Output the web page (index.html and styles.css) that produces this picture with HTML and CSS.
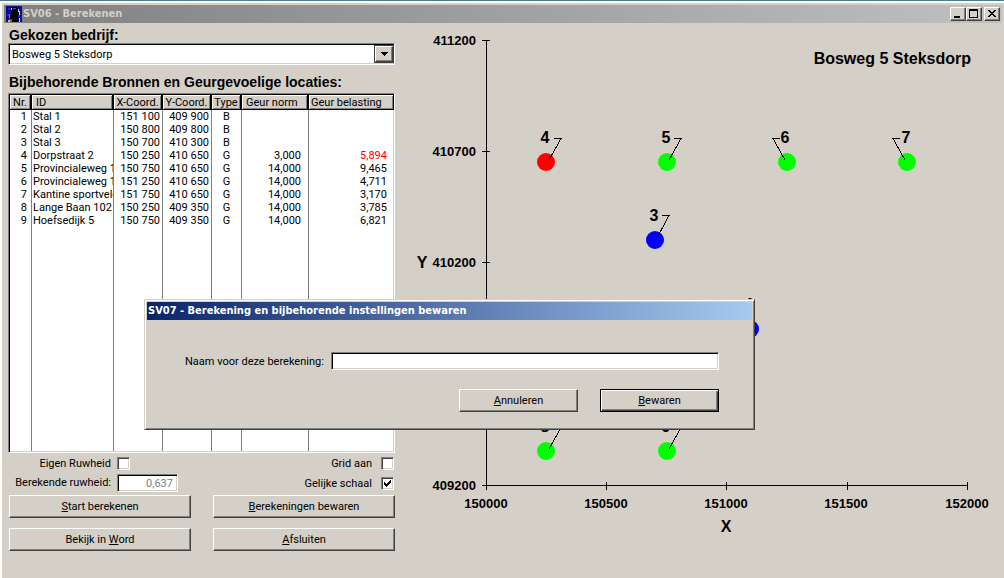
FILE: index.html
```html
<!DOCTYPE html>
<html lang="nl">
<head>
<meta charset="utf-8">
<title>SV06 - Berekenen</title>
<link rel="stylesheet" href="styles.css">
</head>
<body>
<div class="window">
  <header class="titlebar titlebar-inactive">
    <svg class="app-icon" viewBox="0 0 16 16" width="16" height="16" aria-hidden="true" shape-rendering="crispEdges">
      <rect width="16" height="16" fill="#0a0a8c"/>
      <path d="M2 2h2v2H2zM1 8h2v2H1zM12 9h2v2h-2zM3 11h1v3H3z" fill="#2222dd"/>
      <path d="M6 1h5v1h1v3h1v4h-1v7H4V9h1V4h1z" fill="#000"/>
      <path d="M5 2h1v2H5zM12 3h1v2h1v4h-1V6h-1zM13 12h1v4h-1z" fill="#b8d8e8"/>
      <path d="M3 8h1v4H3z" fill="#3aa"/>
      <path d="M4 13h2v3H4z" fill="#c33"/>
      <path d="M7 2h3v1H7z" fill="#555"/>
      <path d="M2 14h2v2H2z" fill="#cc4"/>
    </svg>
    <h1 class="title-text">SV06 - Berekenen</h1>
    <div class="window-controls">
      <button type="button" class="control" aria-label="Minimaliseren"><svg width="12" height="10" viewBox="0 0 12 10"><path d="M2 7h6v2H2z"/></svg></button>
      <button type="button" class="control" aria-label="Maximaliseren"><svg width="12" height="10" viewBox="0 0 12 10"><path fill-rule="evenodd" d="M1 0h9v9H1zM2 2v6h7V2z"/></svg></button>
      <button type="button" class="control control-close" aria-label="Sluiten"><svg width="12" height="10" viewBox="0 0 12 10" shape-rendering="crispEdges"><path d="M2 1h2v1h1v1h2V2h1V1h2v1H9v1H8v1H7v1h1v1h1v1h1v1H8V7H7V6H5v1H4v1H2V7h1V6h1V5h1V4H4V3H3V2H2z"/></svg></button>
    </div>
  </header>

  <div class="workspace">
    <main class="panel">
      <label class="heading" for="bedrijf">Gekozen bedrijf:</label>
      <div class="combo">
        <select id="bedrijf" class="combo-select"><option>Bosweg 5 Steksdorp</option></select>
        <span class="combo-arrow" aria-hidden="true"><svg width="7" height="4" viewBox="0 0 7 4" shape-rendering="crispEdges"><path d="M0 0h7v1H6v1H5v1H4v1H3V3H2V2H1V1H0z"/></svg></span>
      </div>
      <h2 class="heading heading-table">Bijbehorende Bronnen en Geurgevoelige locaties:</h2>
      <div class="grid-frame">
        <table class="grid">
          <colgroup><col class="c-nr"><col class="c-id"><col class="c-coord"><col class="c-coord"><col class="c-type"><col class="c-norm"><col></colgroup>
          <thead>
            <tr><th>Nr.</th><th class="left">ID</th><th>X-Coord.</th><th>Y-Coord.</th><th>Type</th><th class="left">Geur norm</th><th class="left">Geur belasting</th></tr>
          </thead>
          <tbody>
            <tr><td>1</td><td class="id">Stal 1</td><td>151 100</td><td>409 900</td><td class="type">B</td><td></td><td></td></tr>
            <tr><td>2</td><td class="id">Stal 2</td><td>150 800</td><td>409 800</td><td class="type">B</td><td></td><td></td></tr>
            <tr><td>3</td><td class="id">Stal 3</td><td>150 700</td><td>410 300</td><td class="type">B</td><td></td><td></td></tr>
            <tr><td>4</td><td class="id">Dorpstraat 2</td><td>150 250</td><td>410 650</td><td class="type">G</td><td class="num">3,000</td><td class="num over">5,894</td></tr>
            <tr><td>5</td><td class="id">Provincialeweg 1</td><td>150 750</td><td>410 650</td><td class="type">G</td><td class="num">14,000</td><td class="num">9,465</td></tr>
            <tr><td>6</td><td class="id">Provincialeweg 1</td><td>151 250</td><td>410 650</td><td class="type">G</td><td class="num">14,000</td><td class="num">4,711</td></tr>
            <tr><td>7</td><td class="id">Kantine sportveld</td><td>151 750</td><td>410 650</td><td class="type">G</td><td class="num">14,000</td><td class="num">3,170</td></tr>
            <tr><td>8</td><td class="id">Lange Baan 102</td><td>150 250</td><td>409 350</td><td class="type">G</td><td class="num">14,000</td><td class="num">3,785</td></tr>
            <tr><td>9</td><td class="id">Hoefsedijk 5</td><td>150 750</td><td>409 350</td><td class="type">G</td><td class="num">14,000</td><td class="num">6,821</td></tr>
            <tr class="filler"><td></td><td></td><td></td><td></td><td></td><td></td><td></td></tr>
          </tbody>
        </table>
      </div>
      <div class="options">
        <div class="option-fields">
          <label for="eigen">Eigen Ruwheid</label>
          <input id="eigen" class="check" type="checkbox">
          <label for="ruwheid">Berekende ruwheid:</label>
          <input id="ruwheid" class="text-field roughness" type="text" value="0,637" disabled>
        </div>
        <div class="option-fields option-checks">
          <label for="gridaan">Grid aan</label>
          <input id="gridaan" class="check" type="checkbox">
          <label for="schaal">Gelijke schaal</label>
          <input id="schaal" class="check" type="checkbox" checked>
        </div>
      </div>
      <div class="actions">
        <button type="button" class="button"><u>S</u>tart berekenen</button>
        <button type="button" class="button"><u>B</u>erekeningen bewaren</button>
        <button type="button" class="button">Bekijk in <u>W</u>ord</button>
        <button type="button" class="button"><u>A</u>fsluiten</button>
      </div>
    </main>

    <svg class="chart" viewBox="395 23 607 554" preserveAspectRatio="xMinYMin meet" role="img" aria-label="Bosweg 5 Steksdorp">
      <text class="chart-title" x="971" y="64" text-anchor="end">Bosweg 5 Steksdorp</text>
      <g class="lines">
        <path d="M486.500 40V490M482 485.500H968"/>
        <path d="M482 40.500h8M482 151.500h8M482 262.500h8M482 374.500h8"/>
        <path d="M606.500 482v8M726.500 482v8M847.500 482v8M967.500 482v8"/>
      </g>
      <g class="tick-labels" text-anchor="end">
        <text x="476" y="45">411200</text><text x="476" y="156">410700</text><text x="476" y="267">410200</text><text x="476" y="490">409200</text>
      </g>
      <g class="tick-labels" text-anchor="middle">
        <text x="486" y="508">150000</text><text x="606" y="508">150500</text><text x="726" y="508">151000</text><text x="846" y="508">151500</text><text x="967" y="508">152000</text>
      </g>
      <g class="axis-names" text-anchor="middle"><text x="422" y="268">Y</text><text x="726" y="532">X</text></g>
      <g class="receptor">
        <circle class="exceeded" cx="546" cy="162" r="9"/><circle cx="667" cy="162" r="9"/><circle cx="787" cy="162" r="9"/><circle cx="907" cy="162" r="9"/>
        <circle cx="546" cy="451" r="9"/><circle cx="667" cy="451" r="9"/>
      </g>
      <g class="source"><circle cx="655" cy="240" r="9"/><circle cx="750" cy="329" r="9"/><circle cx="679" cy="351" r="9"/></g>
      <g class="lines">
        <path d="M554 138.500h7L549 160M674 138.500h7L669 160M780 138.500h-7L785 160M900 138.500h-7L905 160"/>
        <path d="M662 215.500h7L657 238M554 427.500h7L549 449M674 427.500h7L669 449M744 304.500h-7L749 327"/>
      </g>
      <g class="point-labels" text-anchor="middle">
        <text x="545" y="143">4</text><text x="666" y="143">5</text><text x="785" y="143">6</text><text x="906" y="143">7</text>
        <text x="654" y="221">3</text><text x="545" y="432">8</text><text x="666" y="432">9</text><text x="750" y="310">1</text>
      </g>
    </svg>
  </div>
</div>

<form class="dialog" role="dialog" aria-labelledby="dialog-title">
  <h2 class="titlebar titlebar-active title-text" id="dialog-title">SV07 - Berekening en bijbehorende instellingen bewaren</h2>
  <div class="dialog-field">
    <label for="naam">Naam voor deze berekening:</label>
    <input id="naam" class="text-field" type="text">
  </div>
  <div class="dialog-actions">
    <button type="button" class="button"><u>A</u>nnuleren</button>
    <button type="submit" class="button button-default"><u>B</u>ewaren</button>
  </div>
</form>
</body>
</html>
```

FILE: styles.css
```css
:root {
  --face: #d4d0c8;
  --shade: #808080;
  --dark: #404040;
}

* { box-sizing: border-box; }

body {
  margin: 0;
  min-height: 100vh;
  display: flex;
  flex-direction: column;
  padding-top: 1px;
  background: #4d7c8a;
  color: #000;
  font: 11px/13px Roboto, "Liberation Sans", Arial, sans-serif;
}

button, input, select { font: inherit; color: inherit; border-radius: 0; margin: 0; }

.window {
  flex: 1;
  display: flex;
  flex-direction: column;
  padding: 2px 2px 0 2px;
  background: var(--face);
  border: solid #fff;
  border-width: 2px 0 0 2px;
}

.titlebar {
  display: flex;
  align-items: center;
  height: 18px;
  margin: 0;
}
.titlebar-inactive { padding: 0 2px; background: linear-gradient(to right, #808080, #c0c0c0); color: var(--face); }
.titlebar-active { padding: 0 1px; background: linear-gradient(to right, #0a246a, #a6caf0); color: #fff; }
.title-text { margin: 0; font: bold 11px/18px "DejaVu Sans Condensed", Tahoma, sans-serif; }
.app-icon { margin-right: 1px; }

.window-controls { display: flex; margin-left: auto; }
.control {
  display: grid;
  place-items: center;
  width: 16px;
  height: 14px;
  padding: 0;
  background: var(--face);
  border: 1px solid;
  border-color: #fff var(--dark) var(--dark) #fff;
  box-shadow: inset -1px -1px var(--shade);
}
.control-close { margin-left: 2px; }

.workspace { flex: 1; display: flex; align-items: flex-start; }

.panel {
  flex: none;
  width: 391px;
  display: flex;
  flex-direction: column;
  padding: 4px 0 0 4px;
}

.heading { margin: 0 1px; font: bold 14px/16px "Liberation Sans", Arial, sans-serif; }
.heading-table { margin-top: 9px; margin-bottom: 3px; }

.combo, .grid-frame, .text-field {
  background: #fff;
  border: 1px solid;
  border-color: var(--shade) #fff #fff var(--shade);
  box-shadow: inset 1px 1px #000, inset -1px -1px var(--face);
}
.combo { display: flex; height: 22px; padding: 2px 1px 2px 2px; }
.combo-select {
  flex: 1;
  min-width: 0;
  appearance: none;
  border: 0;
  padding: 0 1px;
  background: transparent;
}
.combo-arrow {
  display: grid;
  place-items: center;
  width: 18px;
  background: var(--face);
  border: 1px solid;
  border-color: #fff var(--dark) var(--dark) #fff;
  outline: 1px solid var(--dark);
  box-shadow: inset -1px -1px var(--shade);
}

.grid-frame { padding: 1px 0 1px 1px; }
.grid { width: 100%; table-layout: fixed; border-collapse: separate; border-spacing: 0; }
.c-nr { width: 22px; }
.c-id { width: 82px; }
.c-coord { width: 49px; }
.c-type { width: 30px; }
.c-norm { width: 67px; }
.grid th {
  height: 15px;
  padding: 0 1px;
  overflow: hidden;
  white-space: nowrap;
  font-weight: normal;
  text-align: center;
  background: var(--face);
  border-right: 2px solid #000;
  border-bottom: 1px solid #000;
  box-shadow: inset 1px 1px #fff, inset -1px -1px var(--shade);
}
.grid th.left { padding-left: 4px; text-align: left; }
.grid th:last-child { border-right-width: 1px; padding-left: 2px; }
.grid td {
  height: 13px;
  padding: 1px 2px 0;
  line-height: 12px;
  overflow: hidden;
  white-space: nowrap;
  text-align: right;
  border-right: 1px solid var(--shade);
}
.grid td:first-child { padding-right: 4px; }
.grid td:last-child { border-right: 0; }
.grid td.id { padding-left: 1px; padding-right: 0; text-align: left; }
.grid td.type { text-align: center; }
.grid td.num { padding-right: 7px; }
.grid td.over { color: #f00; }
.grid .filler td { height: 224px; }

.options { display: flex; justify-content: space-between; padding: 2px 0 3px; }
.option-fields {
  display: grid;
  grid-template-columns: 103px 60px;
  grid-auto-rows: 17px;
  column-gap: 6px;
  row-gap: 2px;
  align-items: center;
  text-align: right;
  white-space: nowrap;
}
.option-checks { grid-template-columns: auto 14px; column-gap: 9px; row-gap: 3px; }
.check {
  appearance: none;
  width: 13px;
  height: 13px;
  background: #fff;
  border: 1px solid;
  border-color: var(--shade) #fff #fff var(--shade);
  box-shadow: inset 1px 1px var(--dark), inset -1px -1px var(--face);
}
.check:checked {
  background-image: linear-gradient(#000, #000), linear-gradient(#000, #000), linear-gradient(#000, #000), linear-gradient(#000, #000), linear-gradient(#000, #000), linear-gradient(#000, #000), linear-gradient(#000, #000);
  background-repeat: no-repeat;
  background-size: 1px 3px;
  background-position: 2px 4px, 3px 5px, 4px 6px, 5px 5px, 6px 4px, 7px 3px, 8px 2px;
}
.text-field { height: 18px; padding: 1px 4px 0; min-width: 0; }
.roughness { width: 61px; text-align: right; color: var(--shade); }

.actions { display: grid; grid-template-columns: 182px 182px; justify-content: space-between; row-gap: 10px; padding-left: 1px; }
.button {
  height: 23px;
  padding: 0;
  background: var(--face);
  border: 1px solid;
  border-color: #fff var(--dark) var(--dark) #fff;
  box-shadow: inset -1px -1px var(--shade);
}
.button-default {
  border-color: #000;
  box-shadow: inset 1px 1px #fff, inset -1px -1px var(--dark), inset -2px -2px var(--shade);
}

.chart { flex: 1; min-width: 0; font-family: "Liberation Sans", Arial, sans-serif; }
.lines path { fill: none; stroke: #000; stroke-width: 1; shape-rendering: crispEdges; }
.chart-title, .point-labels { font-size: 16px; font-weight: bold; }
.tick-labels { font-size: 13px; font-weight: bold; }
.axis-names { font-size: 16px; font-weight: bold; }
.receptor { fill: #0f0; }
.exceeded { fill: #f00; }
.source { fill: #00f; }

.dialog {
  position: absolute;
  left: 144px;
  top: 299px;
  width: 611px;
  padding: 2px 2px 17px;
  background: var(--face);
  border: 1px solid;
  border-color: var(--face) var(--dark) var(--dark) var(--face);
  box-shadow: inset 1px 1px #fff, inset -1px -1px var(--shade);
}
.dialog-field { display: flex; align-items: center; gap: 7px; padding: 32px 33px 0 38px; }
.dialog-field .text-field { flex: 1; }
.dialog-actions { display: flex; justify-content: flex-end; gap: 22px; padding: 19px 33px 0; }
.dialog-actions .button { width: 119px; }
```
